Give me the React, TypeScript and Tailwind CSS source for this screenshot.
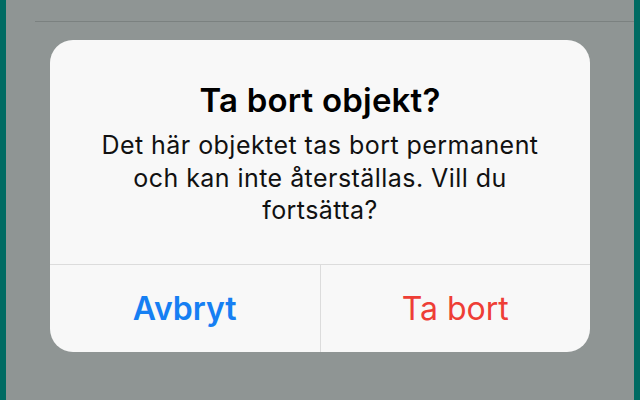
import React from 'react';

export default function App() {
  return (
    <div className="w-[640px] h-[400px] flex bg-[#8f9594] overflow-hidden font-['Inter','Liberation_Sans',sans-serif]">
      <div className="w-[6px] bg-[#006b63]" />
      <div className="flex-1 flex flex-col">
        <div className="h-[21px]" />
        <div className="ml-[29px] h-px bg-[#7b8180]" />
        <div className="h-[18px]" />
        <div className="mx-[44px] w-[540px] h-[312px] bg-[#f8f8f8] rounded-[23px] flex flex-col">
          <div className="flex-1 flex flex-col items-center pt-[41px] px-[44px] text-center">
            <h1 className="text-[33px] leading-[38px] font-semibold text-black tracking-[0.2px]">
              Ta bort objekt?
            </h1>
            <p className="mt-[10px] text-[25px] leading-[32.5px] text-[#111] tracking-[0.45px]">
              Det här objektet tas bort permanent och kan inte återställas. Vill du fortsätta?
            </p>
          </div>
          <div className="h-[88px] border-t border-[#dcdcdc] flex">
            <button className="flex-1 flex items-center justify-center text-[32px] leading-[38px] font-semibold text-[#167ff3]">
              Avbryt
            </button>
            <div className="w-px bg-[#dcdcdc]" />
            <button className="flex-1 flex items-center justify-center text-[32px] leading-[38px] text-[#ee3e36]">
              Ta bort
            </button>
          </div>
        </div>
      </div>
      <div className="w-[6px] bg-[#006b63]" />
    </div>
  );
}
